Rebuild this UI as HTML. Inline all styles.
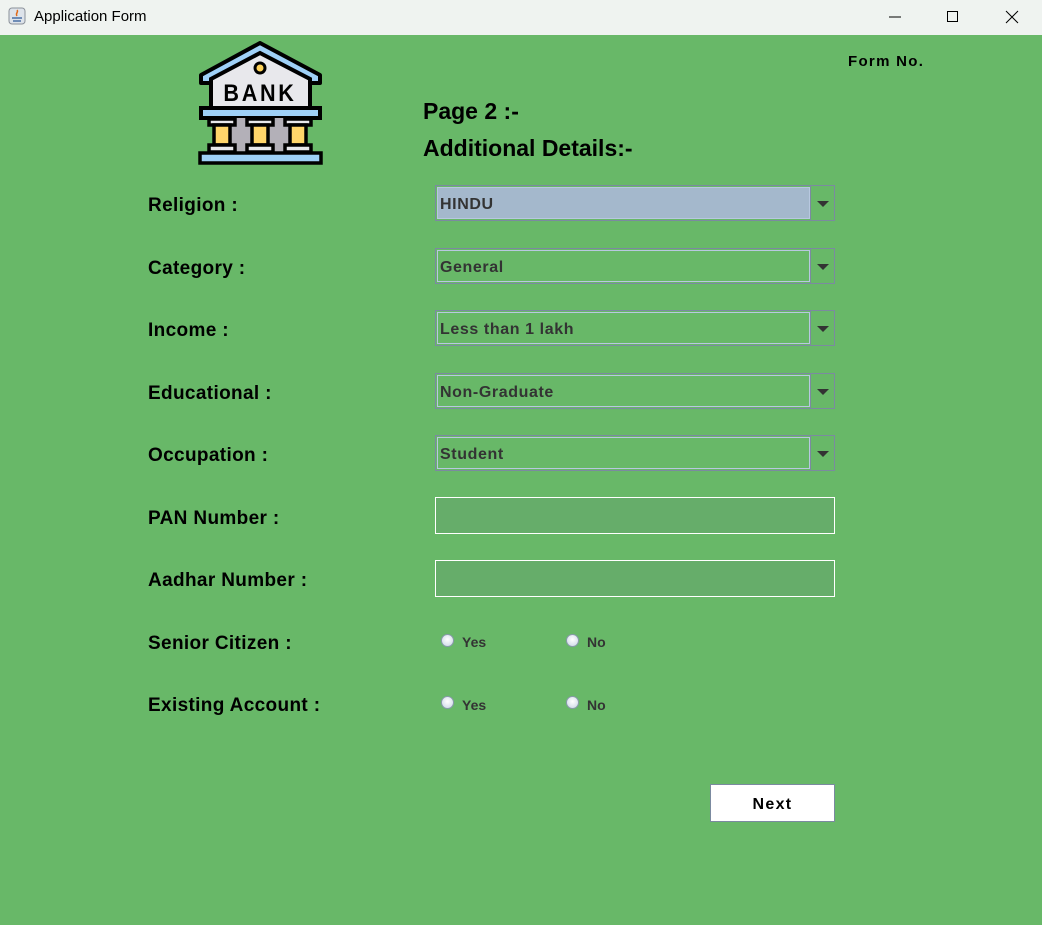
<!DOCTYPE html>
<html><head><style>
body{margin:0;width:1042px;height:925px;overflow:hidden;background:#68b868;font-family:"Liberation Sans",sans-serif;position:relative}
.tb{position:absolute;left:0;top:0;width:1042px;height:35px;background:#eff3f0}
.tb span{position:absolute;left:34px;top:8px;font-size:15px;color:#000}
.a{position:absolute}
.lbl{position:absolute;left:148px;font-weight:bold;font-size:19px;letter-spacing:.35px;color:#000}
.cb{position:absolute;left:435px;width:400px;height:36px;border:1px solid #7b8aa0;box-sizing:border-box}
.cb .in{position:absolute;left:1px;top:1px;width:373px;height:32px;border:1px solid #b8c8e0;box-sizing:border-box;font-weight:bold;font-size:16px;color:#333;padding:8px 0 0 2px;letter-spacing:.6px}
.cb .ar{position:absolute;left:374px;top:0;width:24px;height:34px;border-left:1px solid #7b8aa0}
.cb .ar:after{content:"";position:absolute;left:6px;top:15px;border-left:6px solid transparent;border-right:6px solid transparent;border-top:6px solid #333}
.tf{position:absolute;left:435px;width:400px;height:37px;background:#66ad6a;border:1px solid #fff;box-sizing:border-box}
.rb{position:absolute;width:13px;height:13px;border-radius:50%;background:radial-gradient(circle at 50% 40%,#fff,#c8d4e4);border:1px solid #8899aa;box-sizing:border-box}
.rt{position:absolute;font-weight:bold;font-size:14px;color:#333}
</style></head><body>
<div class="tb">
<svg class="a" style="left:8px;top:7px" width="18" height="18" viewBox="0 0 18 18"><rect x="1" y="1" width="16" height="16" rx="3" fill="#dde3ea" stroke="#8a9099"/><path d="M9 3c2 2-2 3 0 6" stroke="#e06a1a" stroke-width="1.5" fill="none"/><path d="M4 11h10M5 14h8" stroke="#4a6fa5" stroke-width="1.5"/></svg>
<span>Application Form</span>
<svg class="a" style="left:888px;top:10px" width="14" height="14"><path d="M1 7h12" stroke="#000"/></svg>
<svg class="a" style="left:946px;top:10px" width="14" height="14"><rect x="1.5" y="1.5" width="10" height="10" fill="none" stroke="#000"/></svg>
<svg class="a" style="left:1005px;top:10px" width="14" height="14"><path d="M1 1l12 12M13 1L1 13" stroke="#000"/></svg>
</div>
<svg class="a" style="left:197px;top:41px" width="127" height="126" viewBox="0 0 127 126">
<path d="M63 2L4 34v8h119v-8z" fill="#9fd0f7" stroke="#000" stroke-width="4" stroke-linejoin="round"/>
<path d="M63 12L14 38v29h99V38z" fill="#e8e8ec" stroke="#000" stroke-width="4"/>
<circle cx="63" cy="27" r="5" fill="#ffd35a" stroke="#000" stroke-width="3"/>
<text x="63" y="60" text-anchor="middle" font-family="Liberation Sans" font-weight="bold" font-size="24" letter-spacing="3" transform="translate(63 60) scale(0.9 1) translate(-63 -60)">BANK</text>
<rect x="4" y="67" width="119" height="10" fill="#9fd0f7" stroke="#000" stroke-width="4"/>
<rect x="18" y="77" width="92" height="38" fill="#b3b0b8"/>
<g stroke="#000" stroke-width="3.5">
<rect x="12" y="78" width="26" height="6" fill="#e8e8ec"/><rect x="17" y="84" width="16" height="20" fill="#ffd56a"/><rect x="12" y="104" width="26" height="7" fill="#e8e8ec"/>
<rect x="50" y="78" width="26" height="6" fill="#e8e8ec"/><rect x="55" y="84" width="16" height="20" fill="#ffd56a"/><rect x="50" y="104" width="26" height="7" fill="#e8e8ec"/>
<rect x="88" y="78" width="26" height="6" fill="#e8e8ec"/><rect x="93" y="84" width="16" height="20" fill="#ffd56a"/><rect x="88" y="104" width="26" height="7" fill="#e8e8ec"/>
<rect x="3" y="112" width="121" height="10" fill="#9fd0f7"/>
</g></svg>
<div class="a" style="left:848px;top:53px;font-weight:bold;font-size:15px;letter-spacing:1.3px">Form No.</div>
<div class="a" style="left:423px;top:98px;font-weight:bold;font-size:23px">Page 2 :-</div>
<div class="a" style="left:423px;top:135px;font-weight:bold;font-size:23px">Additional Details:-</div>

<div class="lbl" style="top:195px">Religion :</div>
<div class="lbl" style="top:258px">Category :</div>
<div class="lbl" style="top:320px">Income :</div>
<div class="lbl" style="top:383px">Educational :</div>
<div class="lbl" style="top:445px">Occupation :</div>
<div class="lbl" style="top:508px">PAN Number :</div>
<div class="lbl" style="top:570px">Aadhar Number :</div>
<div class="lbl" style="top:633px">Senior Citizen :</div>
<div class="lbl" style="top:695px">Existing Account :</div>

<div class="cb" style="top:185px"><div class="in" style="background:#a4b8cc">HINDU</div><div class="ar"></div></div>
<div class="cb" style="top:248px"><div class="in">General</div><div class="ar"></div></div>
<div class="cb" style="top:310px"><div class="in">Less than 1 lakh</div><div class="ar"></div></div>
<div class="cb" style="top:373px"><div class="in">Non-Graduate</div><div class="ar"></div></div>
<div class="cb" style="top:435px"><div class="in">Student</div><div class="ar"></div></div>

<div class="tf" style="top:497px"></div>
<div class="tf" style="top:560px"></div>

<div class="rb" style="left:441px;top:634px"></div><div class="rt" style="left:462px;top:634px">Yes</div>
<div class="rb" style="left:566px;top:634px"></div><div class="rt" style="left:587px;top:634px">No</div>
<div class="rb" style="left:441px;top:696px"></div><div class="rt" style="left:462px;top:697px">Yes</div>
<div class="rb" style="left:566px;top:696px"></div><div class="rt" style="left:587px;top:697px">No</div>

<div class="a" style="left:710px;top:784px;width:125px;height:38px;background:#fff;border:1px solid #7b8aa0;box-sizing:border-box;text-align:center;line-height:40px;font-weight:bold;font-size:16px;letter-spacing:1.3px">Next</div>
</body></html>
